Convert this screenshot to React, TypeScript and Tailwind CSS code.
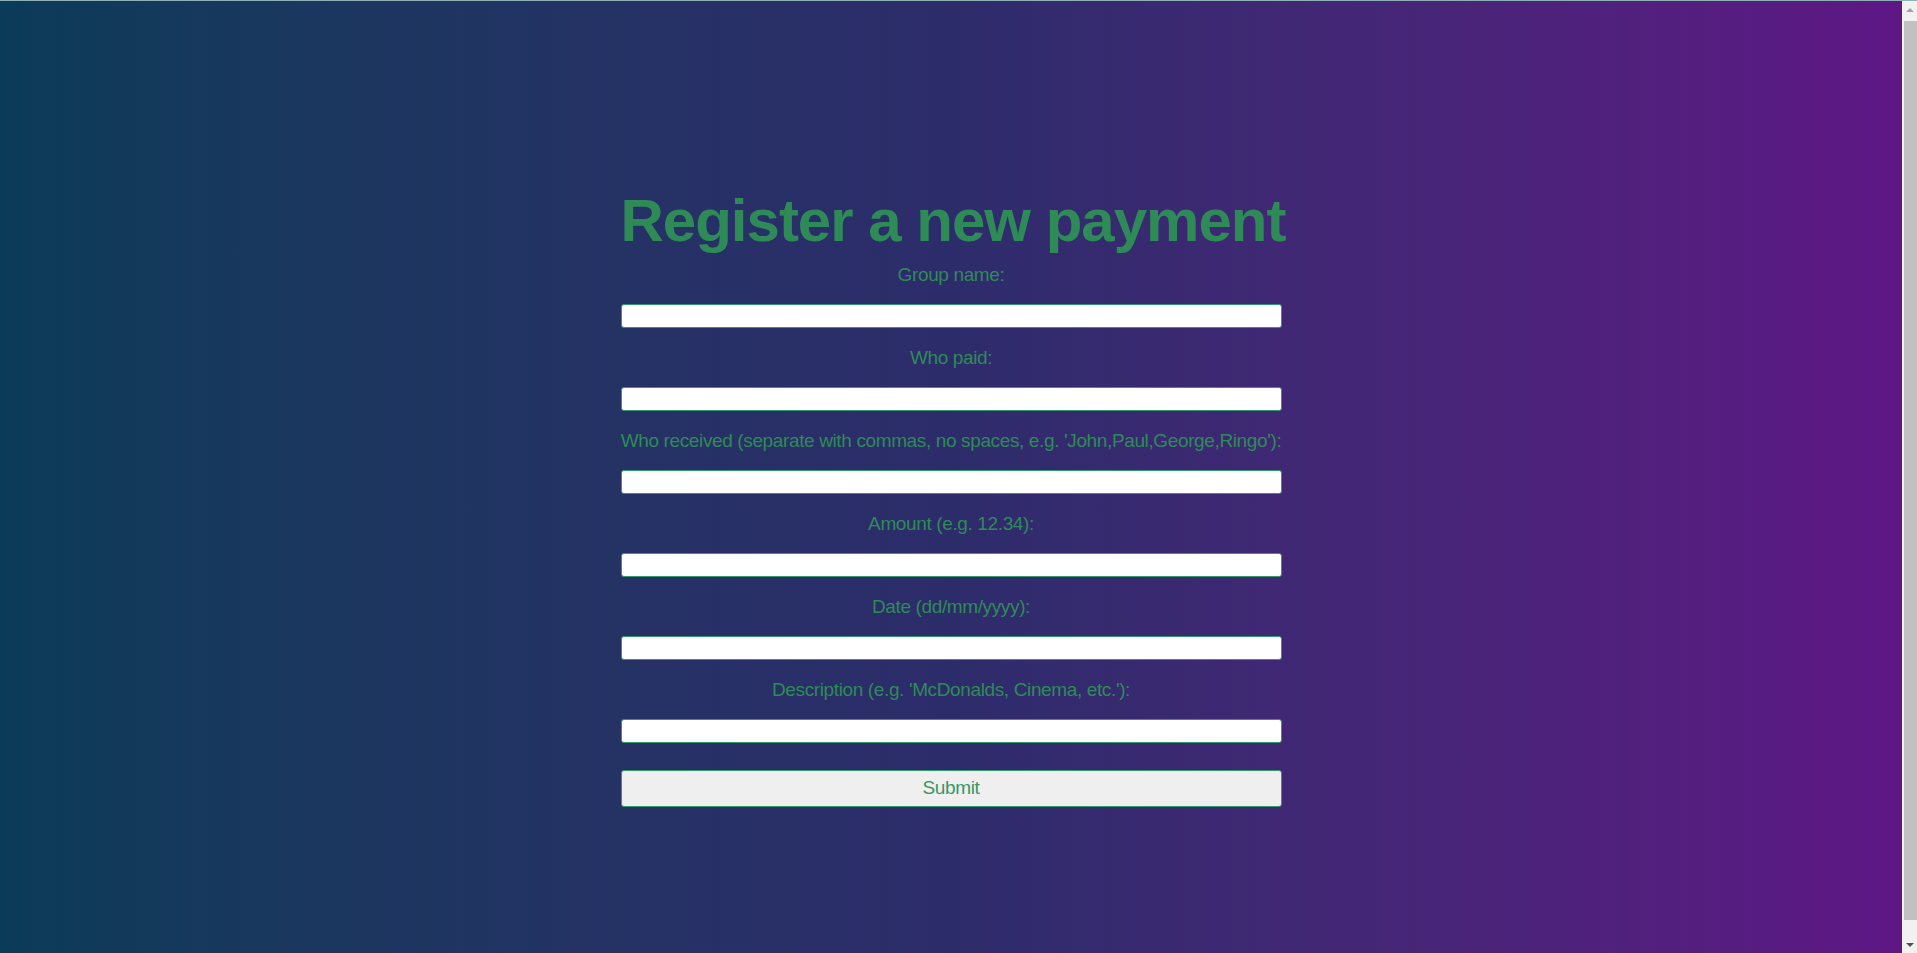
const fields = [
  "Group name:",
  "Who paid:",
  "Who received (separate with commas, no spaces, e.g. 'John,Paul,George,Ringo'):",
  "Amount (e.g. 12.34):",
  "Date (dd/mm/yyyy):",
  "Description (e.g. 'McDonalds, Cinema, etc.'):",
];

function Scrollbar() {
  return (
    <div className="w-[15px] h-full bg-[#f1f1f1] flex flex-col items-stretch">
      <div className="h-[17px] flex items-center justify-center">
        <div className="w-0 h-0 border-l-[4px] border-r-[4px] border-b-[4px] border-l-transparent border-r-transparent border-b-[#a3a3a3]" />
      </div>
      <div className="flex-1 flex flex-col pt-[3px] pb-[16px] pl-[2px]">
        <div className="flex-1 bg-[#c1c1c1]" />
      </div>
      <div className="h-[17px] flex items-center justify-center">
        <div className="w-0 h-0 border-l-[4px] border-r-[4px] border-t-[4px] border-l-transparent border-r-transparent border-t-[#505050]" />
      </div>
    </div>
  );
}

export default function App() {
  return (
    <div className="h-screen w-full flex overflow-hidden border-t border-[#8fb0b6] font-['Liberation_Sans',Arial,sans-serif] text-[#2e8b57]">
      <main className="flex-1 h-full bg-gradient-to-r from-[#0a3b58] via-[#2d2c6b] to-[#5e1785]">
        <form
          className="mx-auto w-[661px] pt-[185px] flex flex-col"
          onSubmit={(e) => e.preventDefault()}
        >
          <h1 className="text-center text-[60px] font-bold leading-[69px] tracking-[-1px] mb-[9px] whitespace-nowrap">
            Register a new payment
          </h1>
          {fields.map((label) => (
            <label key={label} className="flex flex-col">
              <span className="text-center text-[19px] leading-[22px] tracking-[-0.37px] mb-[18px] whitespace-nowrap">
                {label}
              </span>
              <input
                type="text"
                className="h-[24px] w-full bg-white border border-[#33996a] rounded-[3px] mb-[19px] px-1 text-black text-[13px] outline-none"
              />
            </label>
          ))}
          <button
            type="submit"
            className="mt-[8px] h-[37px] w-full bg-[#efefef] border border-[#33996a] rounded-[3px] text-[19px] tracking-[-0.37px] text-[#34976c]"
          >
            Submit
          </button>
        </form>
      </main>
      <Scrollbar />
    </div>
  );
}
